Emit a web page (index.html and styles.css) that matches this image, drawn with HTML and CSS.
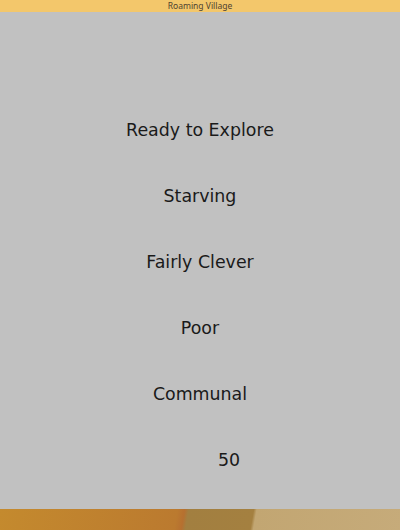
FILE: index.html
```html
<!DOCTYPE html>
<html>
<head>
<meta charset="utf-8">
<link rel="stylesheet" href="styles.css">
</head>
<body>
<div class="window">
  <div class="titlebar">Roaming Village</div>
  <div class="content">
    <div class="row">Ready to Explore</div>
    <div class="row">Starving</div>
    <div class="row">Fairly Clever</div>
    <div class="row">Poor</div>
    <div class="row">Communal</div>
    <div class="row"><span class="number">50</span></div>
  </div>
  <div class="taskbar"></div>
</div>
</body>
</html>
```
FILE: styles.css
```css
html, body {
  margin: 0;
  padding: 0;
  width: 400px;
  height: 530px;
  overflow: hidden;
}
.window {
  display: flex;
  flex-direction: column;
  height: 530px;
  background: #c1c1c1;
  font-family: "DejaVu Sans", sans-serif;
}
.titlebar {
  height: 12px;
  line-height: 12px;
  background: #f3c76b;
  color: #4e4230;
  font-family: "Noto Sans", sans-serif;
  font-size: 8.5px;
  text-align: center;
}
.content {
  flex: 1;
  display: flex;
  flex-direction: column;
  padding-top: 85px;
}
.row {
  height: 66px;
  line-height: 66px;
  text-align: center;
  font-size: 17.4px;
  color: #1a1a1a;
}
.number {
  display: inline-block;
  margin-left: 58px;
}
.taskbar {
  height: 21px;
  background: linear-gradient(100deg, #c48a2e 0px, #bb7a2f 175px, #b67030 182px, #a27f40 186px, #a48040 250px, #c2a672 253px, #c6ab7a 400px);
}
```
